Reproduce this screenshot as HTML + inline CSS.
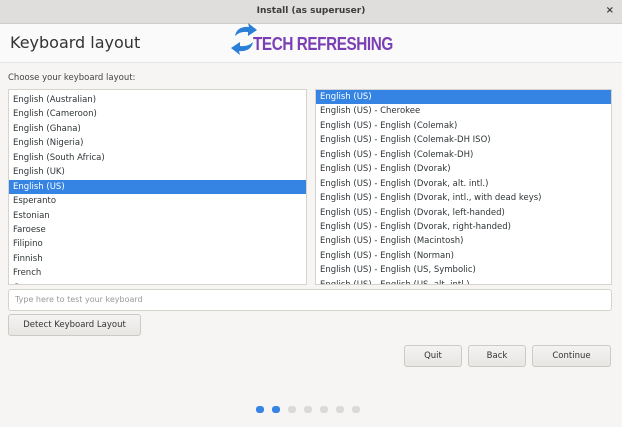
<!DOCTYPE html>
<html><head><style>
*{margin:0;padding:0;box-sizing:border-box}
body{width:622px;height:427px;background:#f6f5f4;font-family:"DejaVu Sans","Liberation Sans",sans-serif;color:#2e3436;position:relative;overflow:hidden;font-size:9px}
.tb{position:absolute;left:0;top:0;width:622px;height:24px;background:#dfdedc;border-bottom:1px solid #cfcdca;text-align:center;font-weight:bold;font-size:9px;line-height:22px;color:#3c3c3c}
.x{position:absolute;right:8px;top:0;font-size:10px}
.hdr{position:absolute;left:0;top:24px;width:622px;height:39px;background:#fafafa;border-bottom:1px solid #e6e4e1}
.h1{position:absolute;left:10px;top:33px;font-size:16px;color:#333}
.logo{position:absolute;left:253px;top:34px;font-family:"Liberation Sans",sans-serif;font-weight:bold;font-size:18px;color:#7b3fb5;letter-spacing:-0.5px;transform:scaleX(0.85);transform-origin:left}
.lbl{position:absolute;left:8px;top:73px;font-size:8.5px;color:#444}
.list{position:absolute;background:#fff;border:1px solid #d6d3cf;overflow:hidden}
.row{height:14.45px;line-height:14.45px;padding-left:4px;font-size:8.5px;white-space:nowrap}
.sel{background:#3584e4;color:#fff}
.inp{position:absolute;left:8px;top:289px;width:604px;height:22px;background:#fff;border:1px solid #d6d3cf;border-radius:3px;color:#999;font-size:8px;line-height:20px;padding-left:6px}
.btn{position:absolute;height:22px;background:linear-gradient(#f4f3f2,#e8e6e3);border:1px solid #cdc9c4;border-radius:3px;text-align:center;line-height:20px;font-size:8.5px;color:#333}
.dot{position:absolute;top:406px;width:8px;height:7px;border-radius:3px;background:#dcdad7}
.dot.on{background:#3584e4}
</style></head><body>
<div class="tb">Install (as superuser)<span class="x">×</span></div>
<div class="hdr"></div>
<div class="h1">Keyboard layout</div>
<svg style="position:absolute;left:229px;top:22px" width="30" height="34" viewBox="0 0 30 34"><path d="M6 14 Q8 4 20 5 L19 1 L28 8 L19 14 L19 10 Q11 9 6 14Z" fill="#2a7fd8"/><path d="M24 20 Q22 30 10 29 L11 33 L2 26 L11 20 L11 24 Q19 25 24 20Z" fill="#2a7fd8"/></svg>
<div class="logo">TECH REFRESHING</div>
<div class="lbl">Choose your keyboard layout:</div>
<div class="list" style="left:8px;top:89px;width:299px;height:196px">
<div style="margin-top:3px">
<div class="row">English (Australian)</div><div class="row">English (Cameroon)</div><div class="row">English (Ghana)</div><div class="row">English (Nigeria)</div><div class="row">English (South Africa)</div><div class="row">English (UK)</div><div class="row sel">English (US)</div><div class="row">Esperanto</div><div class="row">Estonian</div><div class="row">Faroese</div><div class="row">Filipino</div><div class="row">Finnish</div><div class="row">French</div><div class="row">German</div>
</div></div>
<div class="list" style="left:315px;top:89px;width:297px;height:196px">
<div class="row sel">English (US)</div><div class="row">English (US) - Cherokee</div><div class="row">English (US) - English (Colemak)</div><div class="row">English (US) - English (Colemak-DH ISO)</div><div class="row">English (US) - English (Colemak-DH)</div><div class="row">English (US) - English (Dvorak)</div><div class="row">English (US) - English (Dvorak, alt. intl.)</div><div class="row">English (US) - English (Dvorak, intl., with dead keys)</div><div class="row">English (US) - English (Dvorak, left-handed)</div><div class="row">English (US) - English (Dvorak, right-handed)</div><div class="row">English (US) - English (Macintosh)</div><div class="row">English (US) - English (Norman)</div><div class="row">English (US) - English (US, Symbolic)</div><div class="row">English (US) - English (US, alt. intl.)</div>
</div>
<div class="inp">Type here to test your keyboard</div>
<div class="btn" style="left:8px;top:314px;width:133px">Detect Keyboard Layout</div>
<div class="btn" style="left:404px;top:345px;width:58px">Quit</div>
<div class="btn" style="left:468px;top:345px;width:58px">Back</div>
<div class="btn" style="left:532px;top:345px;width:79px">Continue</div>
<div class="dot on" style="left:256px"></div><div class="dot on" style="left:272px"></div><div class="dot" style="left:288px"></div><div class="dot" style="left:304px"></div><div class="dot" style="left:320px"></div><div class="dot" style="left:336px"></div><div class="dot" style="left:352px"></div>
</body></html>
